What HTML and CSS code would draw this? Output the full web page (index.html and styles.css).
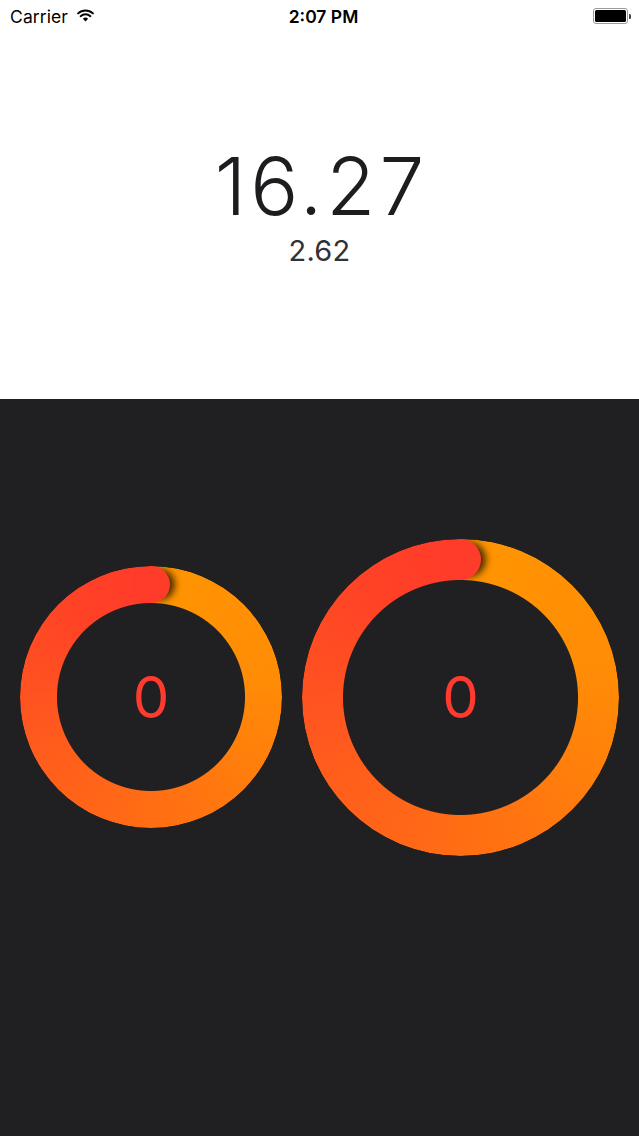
FILE: index.html
```html
<!DOCTYPE html>
<html lang="en">
<head>
<meta charset="utf-8">
<title>Rings</title>
<link rel="stylesheet" href="styles.css">
</head>
<body>
<div class="screen">
  <header class="status-bar">
    <div class="status-left">
      <span class="carrier">Carrier</span>
      <svg class="wifi" width="17" height="13" viewBox="0 0 17 13">
        <path d="M8.5 12.6 L5.9 9.7 A3.8 3.8 0 0 1 11.1 9.7 Z" fill="#000"/>
        <path d="M3.6 7.2 A7.2 7.2 0 0 1 13.4 7.2" fill="none" stroke="#000" stroke-width="1.9" stroke-linecap="round"/>
        <path d="M1.1 4.4 A10.8 10.8 0 0 1 15.9 4.4" fill="none" stroke="#000" stroke-width="1.9" stroke-linecap="round"/>
      </svg>
    </div>
    <div class="status-time">2:07 PM</div>
    <div class="status-right">
      <span class="battery"><span class="battery-fill"></span></span><span class="battery-nub"></span>
    </div>
  </header>

  <section class="readout">
    <div class="readout-main">16.27</div>
    <div class="readout-sub">2.62</div>
  </section>

  <section class="gauges">
    <div class="gauge gauge-sm">
      <div class="ring"><span class="cap"></span></div>
      <span class="gauge-value">0</span>
    </div>
    <div class="gauge gauge-lg">
      <div class="ring"><span class="cap"></span></div>
      <span class="gauge-value">0</span>
    </div>
  </section>
</div>
</body>
</html>
```

FILE: styles.css
```css
* { box-sizing: border-box; }

html, body {
  margin: 0;
  padding: 0;
}

body {
  width: 639px;
  height: 1136px;
  overflow: hidden;
  font-family: Inter, "Noto Sans", "Liberation Sans", sans-serif;
  background: #201f21;
}

.screen {
  display: flex;
  flex-direction: column;
  height: 1136px;
}

/* status bar */
.status-bar {
  height: 34px;
  background: #ffffff;
  display: grid;
  grid-template-columns: 1fr auto 1fr;
  align-items: center;
  padding: 0 8px 2px 10px;
  color: #000;
  font-size: 17.5px;
}

.status-left {
  display: flex;
  align-items: center;
  gap: 9px;
}

.carrier {
  letter-spacing: 0.1px;
}

.wifi {
  display: block;
  margin-top: -2px;
}

.status-time {
  font-weight: 600;
  padding-left: 6px;
}

.status-right {
  display: flex;
  align-items: center;
  justify-content: flex-end;
}

.battery {
  width: 35px;
  height: 16px;
  border: 1px solid #9a9a9a;
  border-radius: 3px;
  padding: 1px;
  display: flex;
}

.battery-fill {
  flex: 1;
  background: #000;
  border-radius: 1.5px;
}

.battery-nub {
  width: 2.5px;
  height: 5px;
  background: #444;
  border-radius: 0 1.5px 1.5px 0;
  margin-left: 1px;
}

/* readout */
.readout {
  height: 365px;
  background: #ffffff;
  display: flex;
  flex-direction: column;
  align-items: center;
  padding-top: 112px;
}

.readout-main {
  font-size: 80px;
  line-height: 80px;
  font-weight: 350;
  color: #1d1c1f;
  letter-spacing: 4px;
  padding-left: 4px;
}

.readout-sub {
  margin-top: 10px;
  font-size: 29px;
  line-height: 29px;
  font-weight: 400;
  color: #323135;
  letter-spacing: 0.3px;
}

/* gauges */
.gauges {
  flex: 1;
  background: #201f21;
  display: flex;
  align-items: center;
  justify-content: center;
  gap: 20px;
  padding: 0 20px;
  height: 596px;
  max-height: 596px;
}

.gauge {
  display: grid;
  place-items: center;
  flex: none;
}

.gauge > * {
  grid-area: 1 / 1;
}

.gauge-sm { width: 262px; height: 262px; --t: 37px; }
.gauge-lg { width: 317px; height: 317px; --t: 41px; }

.ring {
  position: relative;
  width: 100%;
  height: 100%;
  border-radius: 50%;
  background: conic-gradient(from 0deg, #ff9500 0deg, #ff8c06 80deg, #ff7012 170deg, #ff5a1e 250deg, #ff4226 320deg, #ff3b2a 360deg);
  -webkit-mask: radial-gradient(farthest-side, transparent calc(100% - var(--t) - 0.5px), #000 calc(100% - var(--t) + 0.5px));
  mask: radial-gradient(farthest-side, transparent calc(100% - var(--t) - 0.5px), #000 calc(100% - var(--t) + 0.5px));
}

.cap {
  position: absolute;
  top: 0;
  left: calc(50% - var(--t) / 2);
  width: var(--t);
  height: var(--t);
  border-radius: 50%;
  background: #ff3b2a;
  box-shadow: 8px 0 7px -3px rgba(0, 0, 0, 0.7);
}

.gauge-value {
  font-size: 58px;
  line-height: 1;
  font-weight: 400;
  color: #ff3b30;
}
```
